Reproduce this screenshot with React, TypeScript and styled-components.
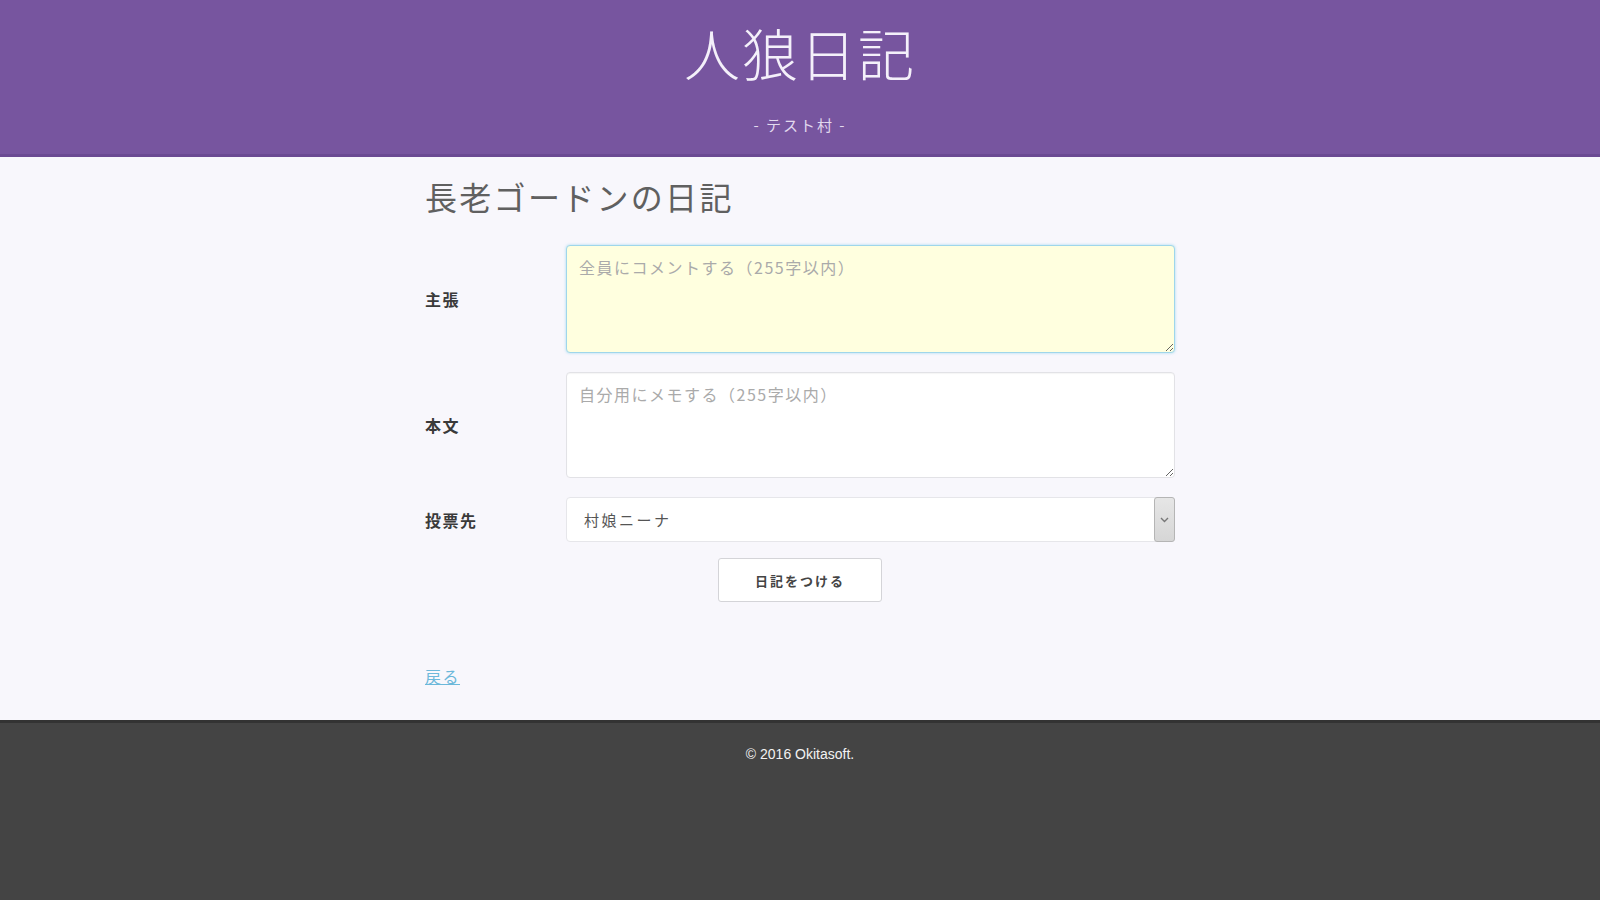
import React from "react";
import styled, { createGlobalStyle } from "styled-components";

const GlobalStyle = createGlobalStyle`
  html, body { margin: 0; padding: 0; }
  body {
    background: #444444;
    font-family: "Liberation Sans", "Noto Sans CJK JP", sans-serif;
    color: #333;
  }
  * { box-sizing: border-box; }
`;

const Page = styled.div`
  display: flex;
  flex-direction: column;
  min-height: 900px;
`;

const Header = styled.header`
  height: 157px;
  background: #77559f;
  border-bottom: 3px solid #6b4a93;
  display: flex;
  flex-direction: column;
  align-items: center;
  padding-top: 22px;
`;

const SiteTitle = styled.h1`
  margin: 0;
  font-family: "Noto Sans CJK JP", sans-serif;
  font-weight: 300;
  font-size: 56px;
  line-height: 60px;
  letter-spacing: 2px;
  color: #f4f0fa;
`;

const SubTitle = styled.p`
  margin: 33px 0 0;
  font-family: "Noto Sans CJK JP", sans-serif;
  font-size: 15px;
  line-height: 20px;
  letter-spacing: 2px;
  color: #e2d9ee;
`;

const Main = styled.main`
  background: #f8f7fc;
  height: 563px;
`;

const Container = styled.div`
  width: 750px;
  margin: 0 auto;
  padding-top: 17px;
  display: flex;
  flex-direction: column;
`;

const PageTitle = styled.h2`
  margin: 0 0 27px;
  font-family: "Noto Sans CJK JP", sans-serif;
  font-weight: 400;
  font-size: 32px;
  line-height: 44px;
  letter-spacing: 2.3px;
  color: #606060;
`;

const Form = styled.form`
  display: flex;
  flex-direction: column;
  gap: 19px;
`;

const Row = styled.div`
  display: grid;
  grid-template-columns: 141px 1fr;
  align-items: center;
`;

const Label = styled.label`
  font-family: "Noto Sans CJK JP", sans-serif;
  font-weight: 700;
  font-size: 16px;
  letter-spacing: 1.5px;
  color: #3a3a3a;
`;

const TextArea = styled.textarea<{ $active?: boolean }>`
  display: block;
  width: 100%;
  height: ${(p) => (p.$active ? 108 : 106)}px;
  padding: 10px 12px;
  font-family: "Noto Sans CJK JP", sans-serif;
  font-size: 16px;
  line-height: 22px;
  letter-spacing: 1.5px;
  border-radius: 4px;
  border: 1px solid ${(p) => (p.$active ? "#9fd6ea" : "#e2e2e6")};
  background: ${(p) => (p.$active ? "#ffffdf" : "#ffffff")};
  box-shadow: ${(p) =>
    p.$active
      ? "0 0 3px rgba(110, 200, 235, 0.6)"
      : "inset 0 1px 1px rgba(0,0,0,0.04)"};
  outline: none;
  resize: vertical;
  &::placeholder {
    color: #aaa;
  }
`;

const SelectBox = styled.div`
  display: flex;
  align-items: stretch;
  height: 45px;
  background: #fff;
  border: 1px solid #e6e6ea;
  border-radius: 4px;
`;

const SelectValue = styled.span`
  flex: 1;
  display: flex;
  align-items: center;
  padding-left: 17px;
  font-family: "Noto Sans CJK JP", sans-serif;
  font-size: 15px;
  letter-spacing: 2.5px;
  color: #555;
`;

const SelectArrow = styled.span`
  width: 21px;
  margin: -1px -1px -1px 0;
  display: flex;
  align-items: center;
  justify-content: center;
  background: linear-gradient(#e6e6e6, #d6d6d6);
  border: 1px solid #b5b5b5;
  border-radius: 3px;
  color: #777;
`;

const ButtonRow = styled.div`
  display: flex;
  justify-content: center;
  margin-top: -3px;
`;

const SubmitButton = styled.button`
  width: 164px;
  height: 44px;
  background: #fff;
  border: 1px solid #d4d4d8;
  border-radius: 3px;
  font-family: "Noto Sans CJK JP", sans-serif;
  font-weight: 700;
  font-size: 13px;
  letter-spacing: 2px;
  color: #444;
  cursor: pointer;
`;

const BackLink = styled.a`
  align-self: flex-start;
  margin-top: 62px;
  font-family: "Noto Sans CJK JP", sans-serif;
  font-size: 16px;
  color: #6cb8da;
  text-decoration: underline;
  letter-spacing: 1.5px;
`;

const Footer = styled.footer`
  flex: 1;
  background: #444444;
  border-top: 3px solid #333;
  display: flex;
  justify-content: center;
  padding-top: 22px;
`;

const Copyright = styled.p`
  margin: 0;
  font-family: "Liberation Sans", sans-serif;
  font-size: 14px;
  line-height: 18px;
  color: #f2f2f2;
`;

export default function App() {
  return (
    <Page>
      <GlobalStyle />
      <Header>
        <SiteTitle>人狼日記</SiteTitle>
        <SubTitle>- テスト村 -</SubTitle>
      </Header>
      <Main>
        <Container>
          <PageTitle>長老ゴードンの日記</PageTitle>
          <Form onSubmit={(e) => e.preventDefault()}>
            <Row>
              <Label>主張</Label>
              <TextArea $active placeholder="全員にコメントする（255字以内）" />
            </Row>
            <Row>
              <Label>本文</Label>
              <TextArea placeholder="自分用にメモする（255字以内）" />
            </Row>
            <Row>
              <Label>投票先</Label>
              <SelectBox>
                <SelectValue>村娘ニーナ</SelectValue>
                <SelectArrow>
                  <svg width="9" height="6" viewBox="0 0 9 6">
                    <path d="M1 1 L4.5 4.5 L8 1" fill="none" stroke="#777" strokeWidth="1.4" />
                  </svg>
                </SelectArrow>
              </SelectBox>
            </Row>
            <ButtonRow>
              <SubmitButton type="submit">日記をつける</SubmitButton>
            </ButtonRow>
          </Form>
          <BackLink href="#">戻る</BackLink>
        </Container>
      </Main>
      <Footer>
        <Copyright>© 2016 Okitasoft.</Copyright>
      </Footer>
    </Page>
  );
}
